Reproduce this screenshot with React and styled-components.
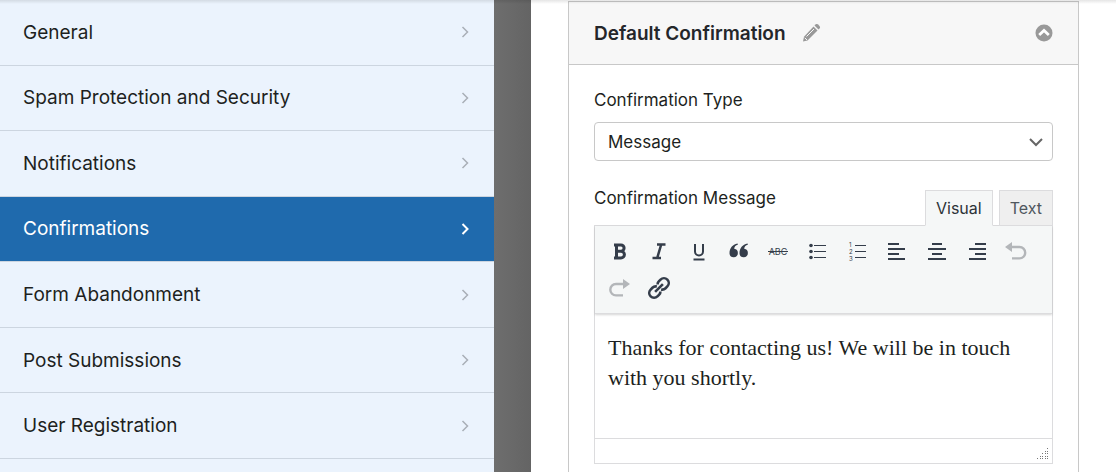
import styled, { createGlobalStyle } from 'styled-components'

const GlobalStyle = createGlobalStyle`
* {
  box-sizing: border-box;
}
body {
  margin: 0;
  background: #fff;
  color: #1d1f21;
  font-family: Inter, 'Liberation Sans', sans-serif;
}
button, select, textarea {
  font: inherit;
  color: inherit;
}
`

const Page = styled.div`
position: relative;
display: grid;
grid-template-columns: 494fr 37px 585fr;
height: 100vh;
overflow: hidden;

&::before {
  content: '';
  position: absolute;
  top: 0;
  left: 0;
  right: 0;
  height: 4px;
  background: linear-gradient(rgba(0, 0, 0, 0.1), rgba(0, 0, 0, 0));
  pointer-events: none;
}
`

const SidebarColumn = styled.div`
background: #ebf3fd;
`

const Sidebar = styled.nav`
display: grid;
grid-auto-rows: 1fr;
min-height: 459px;
`

const SidebarLink = styled.a`
display: flex;
align-items: center;
justify-content: space-between;
padding: 0 24px 0 23px;
font-size: 19px;
line-height: 24px;
text-decoration: none;
border-bottom: 1px solid #ccd5e0;
color: ${(p) => (p.$active ? '#fff' : '#1d1f21')};
background: ${(p) => (p.$active ? '#1f6aad' : 'transparent')};
`

const SidebarName = styled.span`
padding-top: 1px;
`

const Chevron = styled.svg`
flex-shrink: 0;
fill: none;
stroke: ${(p) => (p.$active ? '#fff' : '#a9afb7')};
stroke-width: ${(p) => (p.$active ? 2 : 1.5)};
`

const Gutter = styled.div`
background: linear-gradient(90deg, #6e6e6e, #646464);
`

const Main = styled.main`
padding: 1px 37px 0;
`

const Card = styled.section`
min-height: 100vh;
border: 1px solid #c8c8c8;
`

const CardHeader = styled.header`
display: flex;
align-items: center;
gap: 15px;
height: 63px;
padding: 0 25px;
background: #f7f7f7;
border-bottom: 1px solid #c8c8c8;
`

const CardTitle = styled.h2`
margin: 0;
padding-top: 1px;
font-size: 19px;
font-weight: 600;
line-height: 24px;
color: #24262a;
`

const IconButton = styled.button`
display: flex;
padding: 0;
border: 0;
background: none;
cursor: pointer;
color: #999;
${(p) => p.$end && 'margin-left: auto;'}
`

const CardBody = styled.div`
padding: 23px 25px;
`

const Label = styled.label`
display: block;
font-size: 17px;
line-height: 24px;
`

const SelectBox = styled.div`
display: grid;
align-items: center;
margin: 10px 0 25px;
`

const Select = styled.select`
grid-area: 1 / 1;
width: 100%;
height: 39px;
padding: 0 13px;
font-size: 17px;
appearance: none;
background: #fff;
border: 1px solid #c8c8c8;
border-radius: 4px;
`

const SelectArrow = styled.svg`
grid-area: 1 / 1;
justify-self: end;
margin-right: 10px;
pointer-events: none;
fill: none;
stroke: #666;
stroke-width: 2;
`

const EditorTop = styled.div`
display: flex;
justify-content: space-between;
`

const Tabs = styled.div`
display: flex;
gap: 6px;
margin-top: 4px;
`

const Tab = styled.button`
height: 36px;
padding: 0 10px;
margin-bottom: -1px;
font-size: 16px;
cursor: pointer;
border: 1px solid #dcdcde;
border-bottom-color: ${(p) => (p.$active ? '#f5f7f7' : '#dcdcde')};
background: ${(p) => (p.$active ? '#f5f7f7' : '#efefef')};
color: ${(p) => (p.$active ? '#2c3338' : '#50575e')};
`

const Editor = styled.div`
border: 1px solid #dcdcde;
`

const Toolbar = styled.div`
display: grid;
grid-template-columns: repeat(11, 1fr);
padding: 6px 16px 7px 5px;
background: #f5f7f7;
border-bottom: 1px solid #dcdcde;
box-shadow: 0 1px 2px rgba(0, 0, 0, 0.16);
`

const Tool = styled.button`
display: flex;
align-items: center;
justify-content: center;
height: 37px;
padding: 0;
border: 0;
background: none;
cursor: pointer;
color: ${(p) => (p.disabled ? '#b3b6b9' : '#343d4a')};
`

const Message = styled.textarea`
display: block;
width: 100%;
height: 124px;
padding: 19px 13px;
border: 0;
outline: 0;
resize: none;
background: transparent;
font-family: Georgia, 'Liberation Serif', serif;
font-size: 22px;
line-height: 30px;
`

const StatusBar = styled.div`
display: flex;
align-items: flex-end;
justify-content: flex-end;
height: 25px;
padding: 3px;
border-top: 1px solid #dcdcde;
`

const sections = [
  'General',
  'Spam Protection and Security',
  'Notifications',
  'Confirmations',
  'Form Abandonment',
  'Post Submissions',
  'User Registration',
]

const lines = { fill: 'none', stroke: 'currentColor', strokeWidth: 2 }

const tools = [
  {
    label: 'Bold',
    icon: <path {...lines} strokeWidth="3" d="M8.5 5v15M6 6h7a3 3 0 0 1 0 6.2H8.500M13 12.200a3.300 3.300 0 0 1 0 6.800H6" />,
  },
  { label: 'Italic', icon: <path {...lines} strokeWidth="2.5" d="M10 5.500h8.500M5.500 19h8.500M14.200 5.500l-4 13.500" /> },
  { label: 'Underline', icon: <path {...lines} d="M8 5v7.5a4 4 0 0 0 8 0V5M6.500 20.500h11" /> },
  {
    label: 'Blockquote',
    icon: (
      <g fill="currentColor">
        <path d="M10.5 4.5C5.5 5.5 2.500 9 2.500 14.500a4.200 4.200 0 1 0 4.700-4.700c.2-2.200 1.500-3.500 3.800-4.300z" />
        <path d="M20.5 4.5c-5 1-8 4.500-8 10a4.200 4.200 0 1 0 4.700-4.700c.2-2.200 1.500-3.500 3.800-4.300z" />
      </g>
    ),
  },
  {
    label: 'Strikethrough',
    icon: (
      <g fill="currentColor">
        <text x="12" y="16" fontSize="9" textAnchor="middle">ABC</text>
        <path d="M2 12h20v1H2z" />
      </g>
    ),
  },
  {
    label: 'Bulleted list',
    icon: (
      <g fill="currentColor">
        <circle cx="5" cy="6.5" r="1.8" />
        <circle cx="5" cy="12.5" r="1.8" />
        <circle cx="5" cy="18.5" r="1.8" />
        <path d="M8 6h12v1H8zM8 12h12v1H8zM8 18h12v1H8z" />
      </g>
    ),
  },
  {
    label: 'Numbered list',
    icon: (
      <g fill="currentColor" fontSize="6">
        <text x="3" y="8">1</text>
        <text x="3" y="15">2</text>
        <text x="3" y="22">3</text>
        <path d="M9 6h11v1H9zM9 12h11v1H9zM9 18h11v1H9z" />
      </g>
    ),
  },
  { label: 'Align left', icon: <path {...lines} d="M3 5h11M3 10h17M3 15h11M3 20h17" /> },
  { label: 'Align center', icon: <path {...lines} d="M7 5h10M3 10h18M7 15h10M3 20h18" /> },
  { label: 'Align right', icon: <path {...lines} d="M10 5h11M4 10h17M10 15h11M4 20h17" /> },
  {
    label: 'Undo',
    disabled: true,
    icon: (
      <g fill="currentColor">
        <path d="M1 8l7-5v10z" />
        <path {...lines} strokeWidth="2.4" d="M7 8h8.5a5.700 5.700 0 0 1 0 11.400H8" />
      </g>
    ),
  },
  {
    label: 'Redo',
    disabled: true,
    icon: (
      <g fill="currentColor">
        <path d="M22 8l-7-5v10z" />
        <path {...lines} strokeWidth="2.4" d="M16 8H8a5.700 5.700 0 0 0 0 11.400h7" />
      </g>
    ),
  },
  {
    label: 'Insert link',
    icon: (
      <g {...lines} strokeWidth="2.6" transform="rotate(-45 12 12)">
        <path d="M10.5 15.500a4 4 0 0 1-3 1.300H5a4.800 4.800 0 0 1 0-9.600h2.500a4.800 4.800 0 0 1 4 2.300" />
        <path d="M13.5 8.500a4 4 0 0 1 3-1.300H19a4.800 4.800 0 0 1 0 9.600h-2.500a4.800 4.800 0 0 1-4-2.300" />
        <path d="M6.5 12h11" />
      </g>
    ),
  },
]

const App = () => {
  return (
    <>
      <GlobalStyle />
      <Page>
        <SidebarColumn>
          <Sidebar>
            {sections.map((name) => {
              const active = name === 'Confirmations'
              return (
                <SidebarLink href="#" key={name} $active={active}>
                  <SidebarName>{name}</SidebarName>
                  <Chevron width="10" height="12" viewBox="0 0 10 12" $active={active}>
                    <path d="M2.5 1l5 5-5 5" />
                  </Chevron>
                </SidebarLink>
              )
            })}
          </Sidebar>
        </SidebarColumn>
        <Gutter />
        <Main>
          <Card>
            <CardHeader>
              <CardTitle>Default Confirmation</CardTitle>
              <IconButton aria-label="Rename">
                <svg width="20" height="18" viewBox="0 0 20 18" fill="currentColor">
                  <path d="M13.5 1.500l1-1a2 2 0 0 1 2.600 0l1.400 1.400a2 2 0 0 1 0 2.600l-1 1z" />
                  <path d="M12.5 2.500l4 4L6.500 16.500 2 17.500l1-4.800z" />
                  <path d="M5.5 12.500l7.500-7.500M3.800 13.800l2.200 2.200" fill="none" stroke="#f7f7f7" />
                </svg>
              </IconButton>
              <IconButton $end aria-label="Collapse">
                <svg width="18" height="18" viewBox="0 0 18 18">
                  <circle cx="9" cy="9" r="8.5" fill="currentColor" />
                  <path fill="none" stroke="#fff" strokeWidth="2.8" d="M4.2 11L9 6.500l4.800 4.500" />
                </svg>
              </IconButton>
            </CardHeader>
            <CardBody>
              <Label htmlFor="type">Confirmation Type</Label>
              <SelectBox>
                <Select id="type">
                  <option>Message</option>
                </Select>
                <SelectArrow width="14" height="10" viewBox="0 0 14 10">
                  <path d="M1 2l6 6 6-6" />
                </SelectArrow>
              </SelectBox>
              <EditorTop>
                <Label htmlFor="message">Confirmation Message</Label>
                <Tabs>
                  <Tab $active>Visual</Tab>
                  <Tab>Text</Tab>
                </Tabs>
              </EditorTop>
              <Editor>
                <Toolbar>
                  {tools.map(({ label, icon, disabled }) => (
                    <Tool key={label} aria-label={label} disabled={disabled}>
                      <svg width="24" height="24" viewBox="0 0 24 24">{icon}</svg>
                    </Tool>
                  ))}
                </Toolbar>
                <Message
                  id="message"
                  defaultValue="Thanks for contacting us! We will be in touch with you shortly."
                />
                <StatusBar>
                  <svg width="12" height="12" viewBox="0 0 12 12" fill="#777">
                    <path d="M10 0h1v1h-1zM8 3h1v1h-1zM10 3h1v1h-1zM5 5h1v1h-1zM8 5h1v1h-1zM10 5h1v1h-1zM3 8h1v1h-1zM5 8h1v1h-1zM8 8h1v1h-1zM10 8h1v1h-1zM0 10h1v1h-1zM3 10h1v1h-1zM5 10h1v1h-1zM8 10h1v1h-1zM10 10h1v1h-1z" />
                  </svg>
                </StatusBar>
              </Editor>
            </CardBody>
          </Card>
        </Main>
      </Page>
    </>
  )
}

export default App
